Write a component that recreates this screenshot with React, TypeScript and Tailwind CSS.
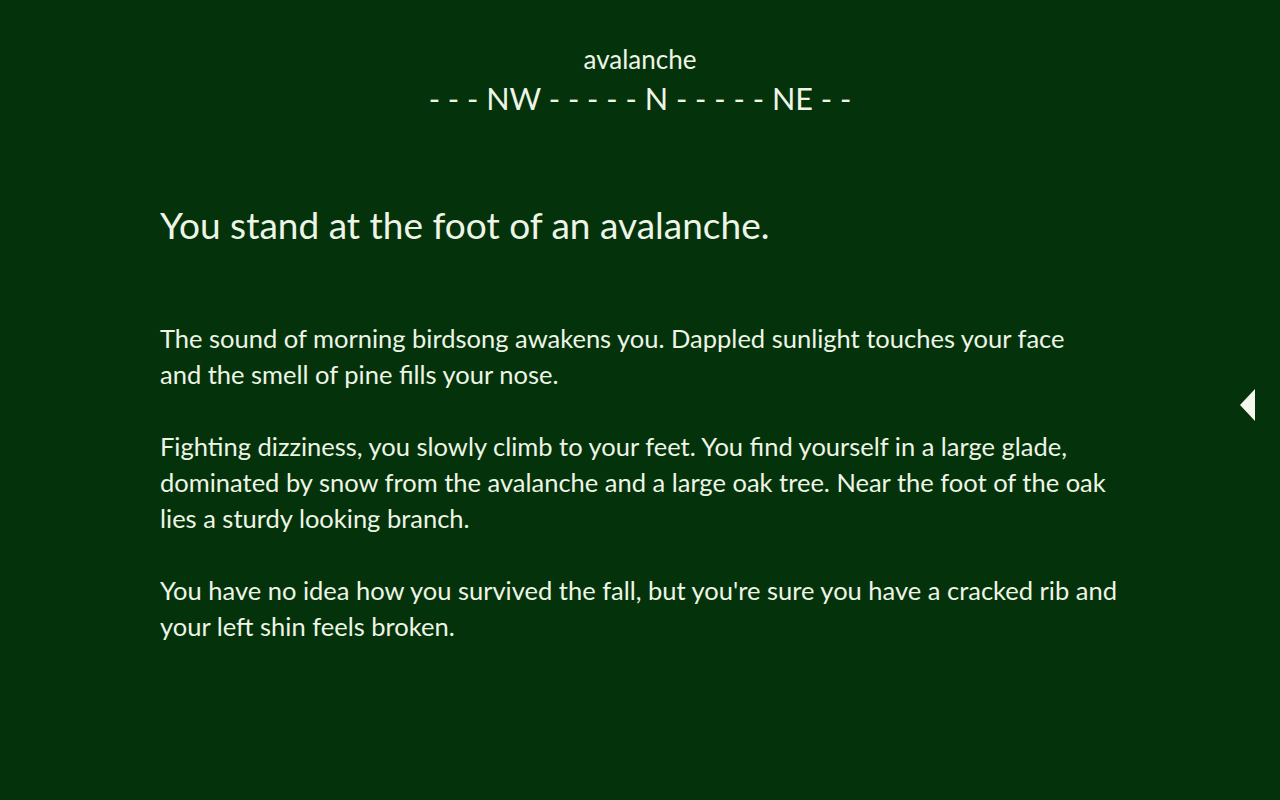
export default function App() {
  return (
    <div className="relative w-full min-h-[800px] bg-[#04330b] text-[#eef5e6]" style={{ fontFamily: 'Lato, "Noto Sans", sans-serif' }}>
      <div className="flex flex-col items-center pt-[43px]">
        <div className="text-[26px] leading-[32px]">avalanche</div>
        <div className="text-[30.6px] leading-[40px] mt-[4px] whitespace-pre">- - - NW - - - - - N - - - - - NE - -</div>
      </div>
      <div className="pl-[160px] w-[1200px]">
        <h1 className="text-[37px] leading-[48px] mt-[82px]">You stand at the foot of an avalanche.</h1>
        <div className="mt-[71px] text-[25.5px] leading-[36px] flex flex-col gap-[36px]">
          <p>The sound of morning birdsong awakens you. Dappled sunlight touches your face<br />and the smell of pine fills your nose.</p>
          <p>Fighting dizziness, you slowly climb to your feet. You find yourself in a large glade,<br />dominated by snow from the avalanche and a large oak tree. Near the foot of the oak<br />lies a sturdy looking branch.</p>
          <p>You have no idea how you survived the fall, but you're sure you have a cracked rib and<br />your left shin feels broken.</p>
        </div>
      </div>
      <div className="absolute left-[1240px] top-[389px] w-0 h-0 border-y-[16px] border-y-transparent border-r-[15px] border-r-[#f4f8ee]" />
    </div>
  );
}
